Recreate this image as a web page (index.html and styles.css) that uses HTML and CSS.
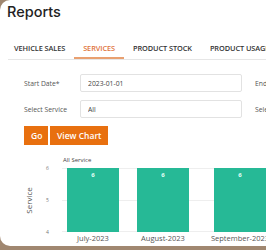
FILE: index.html
```html
<!DOCTYPE html>
<html lang="en">
<head>
    <meta charset="UTF-8">
    <meta name="viewport" content="width=device-width, initial-scale=1.0">
    <title>Reports</title>
    <link rel="stylesheet" href="styles.css">
</head>
<body>
    <div class="card">
        <h1 class="title">Reports</h1>

        <ul class="tabs">
            <li>VEHICLE SALES</li>
            <li class="active">SERVICES</li>
            <li>PRODUCT STOCK</li>
            <li>PRODUCT USAGE</li>
        </ul>

        <form class="filters">
            <div class="row">
                <label>Start Date*</label>
                <input type="text" value="2023-01-01">
                <label class="next">End Date*</label>
            </div>
            <div class="row">
                <label>Select Service</label>
                <input type="text" value="All">
                <label class="next">Select Type</label>
            </div>
            <div class="buttons">
                <button type="button">Go</button>
                <button type="button">View Chart</button>
            </div>
        </form>

        <div class="chart">
            <div class="chart-title">All Service</div>
            <div class="chart-body">
                <div class="y-title"><span>Service</span></div>
                <div class="ticks">
                    <span>6</span>
                    <span>5</span>
                    <span>4</span>
                </div>
                <div class="plot">
                    <div class="bar"><span>6</span></div>
                    <div class="bar"><span>6</span></div>
                    <div class="bar bar-last"><span>6</span></div>
                </div>
            </div>
            <div class="x-labels">
                <span>July-2023</span>
                <span>August-2023</span>
                <span class="label-last">September-2023</span>
            </div>
        </div>
    </div>
</body>
</html>
```

FILE: styles.css
```css
body {
    margin: 0;
    padding: 0;
    background-color: #a08770;
    font-family: "Open Sans", "Liberation Sans", sans-serif;
    width: 266px;
    height: 250px;
    overflow: hidden;
}
.card {
    background-color: #fff;
    width: 330px;
    height: 246px;
    border-radius: 10px;
    overflow: hidden;
    white-space: nowrap;
}
.title {
    margin: 0;
    padding: 3px 0 0 7px;
    font-family: "Inter", sans-serif;
    font-size: 14.5px;
    font-weight: 500;
    color: #222;
    height: 24px;
}
.tabs {
    list-style: none;
    margin: 12px 0 0 8px;
    padding: 0;
    display: flex;
    border-bottom: 1px solid #e6e6e6;
}
.tabs li {
    padding: 0 9px;
    height: 20px;
    line-height: 18px;
    font-size: 7.4px;
    font-weight: 600;
    color: #333;
    letter-spacing: -0.1px;
    box-sizing: border-box;
    border-bottom: 2px solid transparent;
}
.tabs li:first-child {
    padding-left: 6px;
}
.tabs li.active {
    color: #e0733a;
    border-bottom-color: #e9a070;
}
.filters {
    padding: 14px 0 0 24px;
}
.row {
    display: grid;
    grid-template-columns: 56px 162px auto;
    align-items: center;
    margin-bottom: 8px;
}
.row label {
    font-size: 6.8px;
    color: #555;
}
.row .next {
    padding-left: 13px;
}
.row input {
    height: 18px;
    box-sizing: border-box;
    border: 1px solid #e2e2e2;
    border-radius: 2px;
    padding: 0 7px;
    font-family: inherit;
    font-size: 6.8px;
    color: #444;
}
.buttons {
    display: flex;
    gap: 2px;
}
.buttons button {
    background-color: #e8700f;
    color: #fff;
    border: none;
    height: 19px;
    padding: 0 7px;
    font-family: inherit;
    font-size: 8.5px;
    font-weight: 600;
}
.buttons button:first-child {
    width: 24px;
}
.chart {
    padding-top: 11px;
}
.chart-title {
    padding-left: 63px;
    font-size: 6px;
    color: #444;
    height: 12px;
}
.chart-body {
    display: flex;
    height: 64px;
}
.y-title {
    width: 46px;
    display: flex;
    align-items: center;
    justify-content: center;
}
.y-title span {
    transform: rotate(-90deg);
    font-size: 8px;
    color: #555;
    margin-left: 10px;
}
.ticks {
    width: 16px;
    display: flex;
    flex-direction: column;
    justify-content: space-between;
    font-size: 5px;
    color: #777;
    margin: -3px 0;
}
.plot {
    flex: 1;
    display: flex;
    padding-left: 5px;
    gap: 18px;
    background: linear-gradient(#eee, #eee) 0 0 / 100% 1px no-repeat,
        linear-gradient(#eee, #eee) 0 50% / 100% 1px no-repeat,
        linear-gradient(#eee, #eee) 0 100% / 100% 1px no-repeat;
}
.bar {
    width: 52px;
    flex-shrink: 0;
    background-color: #26b996;
    text-align: center;
}
.bar-last {
    margin-left: 7px;
}
.bar span {
    display: block;
    padding-top: 3px;
    color: #e8fff8;
    font-size: 6px;
    font-weight: 700;
}
.x-labels {
    display: flex;
    padding-left: 67px;
    padding-top: 1px;
    font-size: 7.5px;
    color: #555;
}
.x-labels span {
    width: 52px;
    margin-right: 18px;
    display: flex;
    justify-content: center;
}
.x-labels .label-last {
    margin-left: 7px;
}
```
